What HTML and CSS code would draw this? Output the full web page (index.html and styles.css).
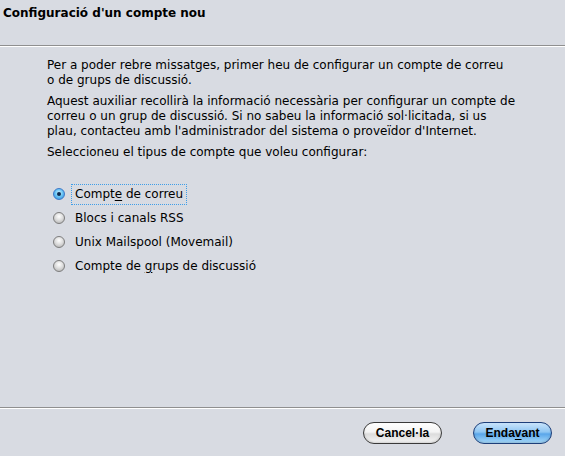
FILE: index.html
```html
<!DOCTYPE html>
<html>
<head>
<meta charset="utf-8">
<link rel="stylesheet" href="styles.css">
</head>
<body>
<div class="wizard">
  <div class="header"><h1 class="title">Configuració d'un compte nou</h1></div>
  <div class="sep"></div>
  <div class="content">
    <p class="para">Per a poder rebre missatges, primer heu de configurar un compte de correu<br>o de grups de discussió.</p>
    <p class="para">Aquest auxiliar recollirà la informació necessària per configurar un compte de<br>correu o un grup de discussió. Si no sabeu la informació sol·licitada, si us<br>plau, contacteu amb l'administrador del sistema o proveïdor d'Internet.</p>
    <p class="para">Seleccioneu el tipus de compte que voleu configurar:</p>
    <ul class="radios">
      <li class="radio-row"><span class="radio checked"></span><span class="label focus">Compt<u>e</u> de correu</span></li>
      <li class="radio-row"><span class="radio"></span><span class="label">Blocs i canals RSS</span></li>
      <li class="radio-row"><span class="radio"></span><span class="label">Unix Mailspool (Movemail)</span></li>
      <li class="radio-row"><span class="radio"></span><span class="label">Compte de <u>g</u>rups de discussió</span></li>
    </ul>
  </div>
  <div class="sep"></div>
  <div class="footer">
    <button class="btn">Cancel·la</button>
    <button class="btn primary">Enda<u>v</u>ant</button>
  </div>
</div>
</body>
</html>
```
FILE: styles.css
```css
html, body {
  margin: 0;
  padding: 0;
}
body {
  background: #d8dbe2;
  font-family: "DejaVu Sans", Verdana, sans-serif;
  font-size: 12px;
  color: #000;
}
.wizard {
  display: flex;
  flex-direction: column;
  height: 456px;
}
.header {
  height: 45px;
  padding: 6px 0 0 3px;
  box-sizing: border-box;
}
.title {
  margin: 0;
  font-size: 12px;
  font-weight: bold;
  line-height: 15px;
}
.sep {
  height: 1px;
  background: #8f8f8f;
  border-bottom: 1px solid #ffffff;
}
.content {
  flex: 1;
  padding: 11px 20px 0 47px;
}
.para {
  margin: 0 0 6px 0;
  line-height: 15px;
}
.radios {
  list-style: none;
  margin: 22px 0 0 6px;
  padding: 0;
}
.radio-row {
  display: flex;
  align-items: center;
  height: 24px;
}
.radio {
  width: 12px;
  height: 12px;
  border-radius: 50%;
  box-sizing: border-box;
  border: 1px solid #7d7d7d;
  background: radial-gradient(circle at 50% 35%, #ffffff 0%, #dedede 45%, #ababab 100%);
  margin-right: 9px;
  position: relative;
}
.radio.checked {
  border-color: #3d78c8;
  background: radial-gradient(circle at 50% 40%, #d8f4ff 0%, #6cc6f5 45%, #2a86d8 100%);
}
.radio.checked::after {
  content: "";
  position: absolute;
  left: 3px;
  top: 3px;
  width: 4px;
  height: 4px;
  border-radius: 50%;
  background: #0b2a50;
}
.label {
  padding: 2px 3px;
  margin-left: -3px;
  border: 1px dotted transparent;
  line-height: 15px;
}
.label.focus {
  border-color: #3f9ee8;
}
.label u, .btn u {
  text-underline-offset: 2px;
}
.footer {
  height: 47px;
  display: flex;
  justify-content: flex-end;
  align-items: center;
  gap: 31px;
  padding: 0 13px 0 0;
}
.btn {
  width: 79px;
  height: 22px;
  border-radius: 11px;
  font-family: "Liberation Sans", Arial, sans-serif;
  font-weight: bold;
  font-size: 12px;
  color: #000;
  border: 1px solid #3a3a3a;
  background: linear-gradient(#ffffff 0%, #f4f4f4 45%, #dcdcdc 55%, #f6f6f6 100%);
  padding: 0;
  box-shadow: inset 0 -1px 2px rgba(0,0,0,0.15);
}
.btn.primary {
  border-color: #1d3f7a;
  background: linear-gradient(#c9e4fb 0%, #8fc6f3 45%, #5aa6ea 55%, #a8dbfb 100%);
}
```
